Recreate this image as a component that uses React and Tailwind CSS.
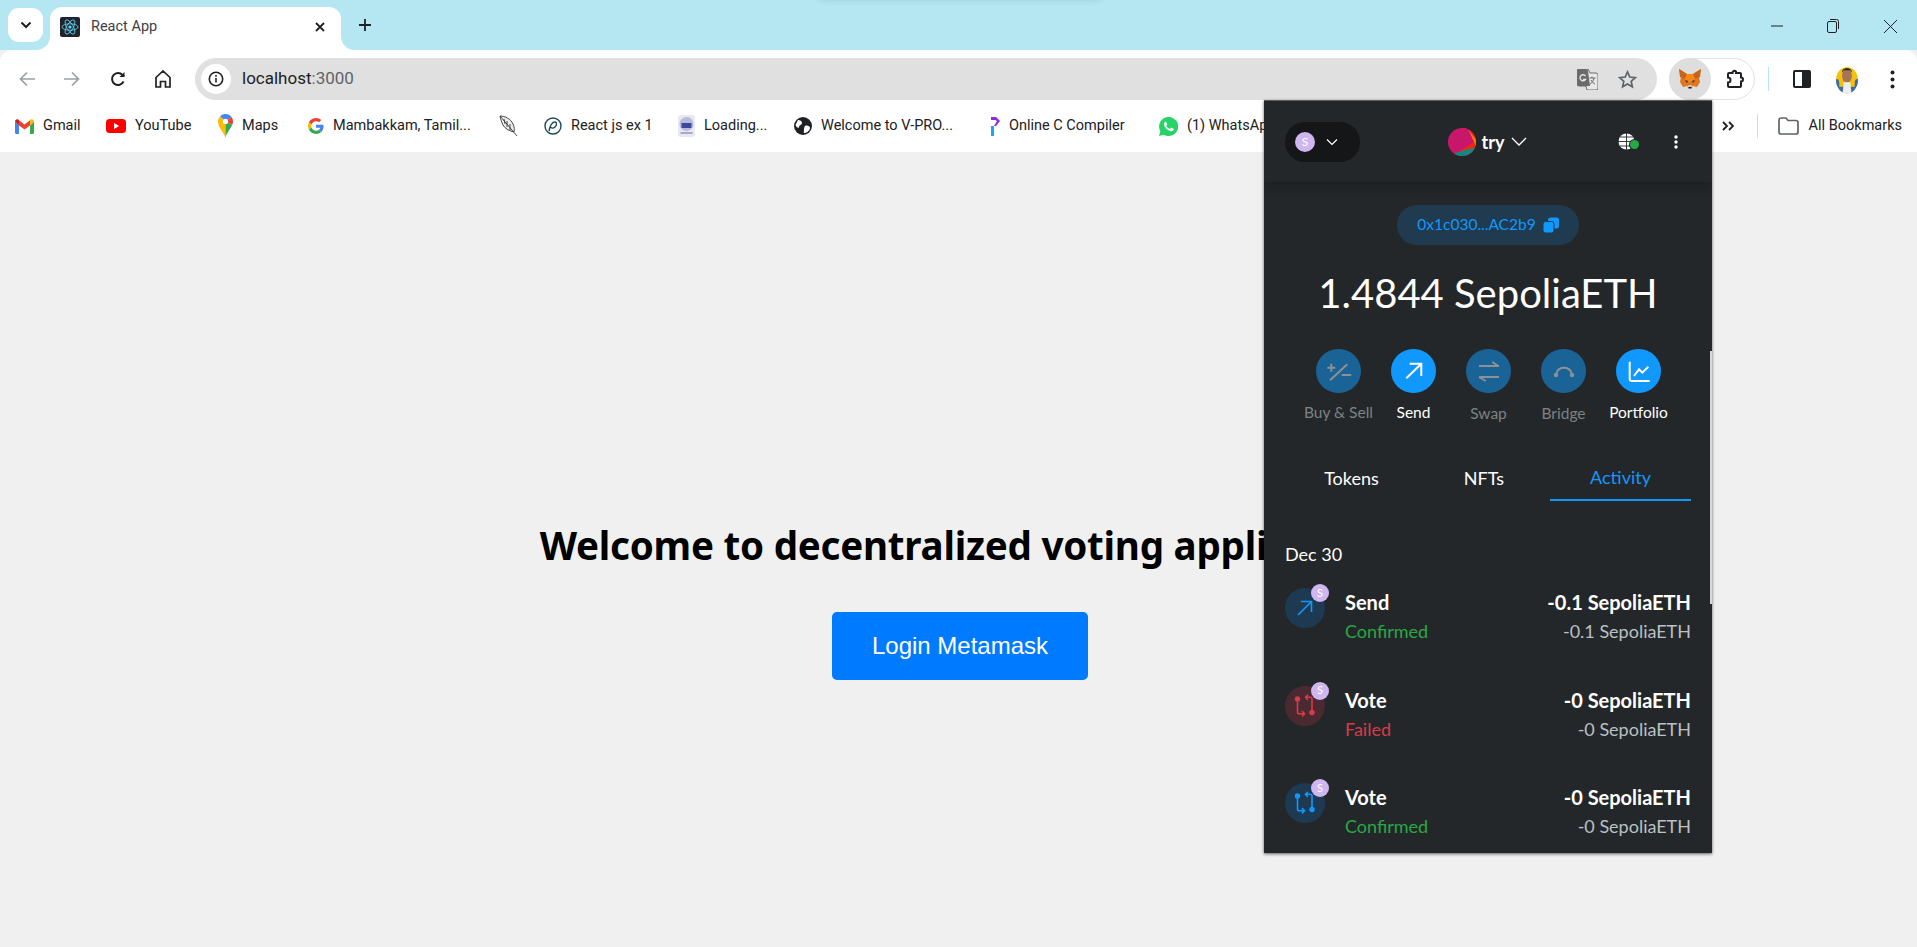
import React from 'react'

const Fox = ({ className }) => (
  <svg className={className} viewBox="0 0 24 24">
    <path d="M1 2l8 5h6l8-5-2 8 1 5-3 5-4-1-1 2h-4l-1-2-4 1-3-5 1-5z" fill="#e2761b" />
    <path d="M1 2l8 5-2 5-5-2z M23 2l-8 5 2 5 5-2z" fill="#c9631a" />
    <path d="M9 7h6l2 5-3 3h-4l-3-3z" fill="#f6851b" />
    <path d="M7 13l3 1-1 2z M17 13l-3 1 1 2z" fill="#233447" />
    <path d="M9 19l1 2h4l1-2-2-1h-2z" fill="#d7c1b3" />
    <path d="M10.500 20h3v1.500h-3z" fill="#161616" />
  </svg>
)

const ReactFavicon = () => (
  <svg className="w-5 h-5 rounded-[2px] bg-[#20232a]" viewBox="0 0 20 20" fill="none" stroke="#61dafb" strokeWidth="0.8">
    <ellipse cx="10" cy="10" rx="8" ry="3.200" />
    <ellipse cx="10" cy="10" rx="8" ry="3.200" transform="rotate(60 10 10)" />
    <ellipse cx="10" cy="10" rx="8" ry="3.200" transform="rotate(120 10 10)" />
    <circle cx="10" cy="10" r="1.600" fill="#61dafb" stroke="none" />
  </svg>
)

const GmailIcon = () => (
  <svg className="w-[19px] h-[15px]" viewBox="0 0 19 15">
    <path d="M0 2.500v11c0 .8.600 1.500 1.500 1.500H4V6.500z" fill="#4285f4" />
    <path d="M15 6.500V15h2.500c.9 0 1.500-.7 1.500-1.500v-11z" fill="#34a853" />
    <path d="M0 2.500C0 .8 1.900-.4 3.200.6L4 1.200v5.300z" fill="#c5221f" />
    <path d="M4 1.200l5.500 4.200L15 1.200v5.300L9.500 10.600 4 6.500z" fill="#ea4335" />
    <path d="M15 1.200l.8-.6C17.100-.4 19 .8 19 2.500l-4 4z" fill="#fbbc04" />
  </svg>
)

const YoutubeIcon = () => (
  <svg className="w-5 h-[14px]" viewBox="0 0 20 14">
    <rect width="20" height="14" rx="3.500" fill="#ff0000" />
    <path d="M8 4l5.200 3L8 10z" fill="#fff" />
  </svg>
)

const MapsIcon = () => (
  <svg className="w-[15px] h-[24px]" viewBox="0 0 15 24">
    <path d="M7.500 24C6.500 19 0 14 0 7.500c0-2 .8-3.900 2.200-5.300l5.300 5.300z" fill="#fbbc04" />
    <path d="M2.200 2.200C3.600.8 5.500 0 7.500 0c2.500 0 4.700 1.200 6 3L7.500 7.500z" fill="#4285f4" />
    <path d="M13.500 3c.9 1.300 1.500 2.800 1.500 4.500 0 1.200-.3 2.300-.7 3.300L7.500 7.500z" fill="#ea4335" />
    <path d="M14.300 10.800C12.500 15 8.500 19 7.500 24V7.500z" fill="#34a853" />
    <circle cx="7.500" cy="7.500" r="2.700" fill="#fff" />
  </svg>
)

const GoogleIcon = () => (
  <svg className="w-4 h-4" viewBox="0 0 48 48">
    <path fill="#EA4335" d="M24 9.500c3.500 0 6.700 1.200 9.200 3.600l6.900-6.900C35.900 2.400 30.500 0 24 0 14.600 0 6.500 5.400 2.600 13.200l8 6.200C12.400 13.700 17.700 9.500 24 9.500z" />
    <path fill="#4285F4" d="M46.500 24.500c0-1.600-.2-3.100-.4-4.500H24v9h12.700c-.6 2.900-2.200 5.400-4.700 7.100l7.700 6c4.500-4.200 6.800-10.400 6.800-17.600z" />
    <path fill="#FBBC05" d="M10.500 28.600c-.5-1.400-.8-3-.8-4.600s.3-3.200.8-4.600l-8-6.200C.9 16.500 0 20.100 0 24s.9 7.500 2.600 10.800z" />
    <path fill="#34A853" d="M24 48c6.500 0 11.900-2.100 15.900-5.900l-7.700-6c-2.100 1.400-4.900 2.300-8.100 2.300-6.300 0-11.600-4.200-13.500-9.900l-8 6.200C6.500 42.600 14.600 48 24 48z" />
  </svg>
)

const FeatherIcon = () => (
  <svg className="w-[19px] h-[22px]" viewBox="0 0 19 22" fill="none" stroke="#333" strokeWidth="0.9">
    <path d="M1 1c5 0 11 3 13 8 1.500 3 1.500 6 1 8-4-1-9-3-11-7C2.500 7 1.500 4 1 1z" fill="#eee" />
    <path d="M1 1l17 20 M5 4l1 5 M8 6l0 6 M11 9l0 6" />
  </svg>
)

const SwirlIcon = () => (
  <svg className="w-[18px] h-[18px]" viewBox="0 0 18 18" fill="none" stroke="#1f4a5c" strokeWidth="1.400">
    <circle cx="9" cy="9" r="8" />
    <path d="M5 14c1-5 3-9 6-9 2 0 2 3 0 5-1.500 1.500-4 1.500-4 0" />
  </svg>
)

const ShieldIcon = () => (
  <svg className="w-[17px] h-[22px]" viewBox="0 0 17 22">
    <rect width="17" height="22" rx="3" fill="#e8e8f2" />
    <circle cx="8.500" cy="9" r="7" fill="#b8bbdc" />
    <rect x="3.500" y="8" width="10" height="5" fill="#3c4a9c" />
    <rect x="2.500" y="17" width="12" height="2" fill="#a5a8d0" />
  </svg>
)

const GlobeIcon = () => (
  <svg className="w-[18px] h-[18px]" viewBox="0 0 18 18">
    <circle cx="9" cy="9" r="9" fill="#202124" />
    <path d="M4 3c2 0 4 1 4 3S5 8 5 10 2 10 1.500 8zM11 9c2-1 5 0 5 2s-3 5-5 5-1-2-1-3 0-3 1-4z" fill="#fff" />
  </svg>
)

const CompilerIcon = () => (
  <svg className="w-[11px] h-[19px]" viewBox="0 0 11 19">
    <path d="M2 0h5l4 4-4 5H5l3-5-2-1H2z" fill="#8a2be2" />
    <path d="M2 9h3v10H2z" fill="#19a5ff" />
  </svg>
)

const WhatsappIcon = () => (
  <svg className="w-[19px] h-[19px]" viewBox="0 0 20 20">
    <path d="M10 0a10 10 0 0 0-8.600 15L0 20l5.200-1.400A10 10 0 1 0 10 0z" fill="#25d366" />
    <path d="M6.800 4.800c-.5.100-1.800 1.300-1.500 3.200.3 2 2.800 6 7.300 7 1.600.2 2.900-1 3-2 .1-.5-2.600-2-3-1.800l-1.200 1.300c-1 0-3.300-1.800-3.800-3.200l1-1.200c.2-.4-.9-3.300-1.800-3.300z" fill="#fff" />
  </svg>
)

const Bookmark = ({ icon, label, className }) => (
  <div className={`flex items-center shrink-0 ${className}`}>
    <span className="shrink-0 flex">{icon}</span>
    {label && <span className="ml-[9px] text-[14.500px] text-[#202124] whitespace-nowrap">{label}</span>}
  </div>
)

const SBadge = ({ className }) => (
  <div className={`rounded-full bg-[#d0b6f0] text-white flex items-center justify-center ${className}`}>S</div>
)

const actions = [
  {
    label: 'Buy & Sell',
    active: false,
    labelClass: 'mt-[9px]',
    icon: <path d="M6 24.300L23.300 8.300 M3.300 11.700h8 M7.300 7.700v8 M17.700 19h9.600" />,
  },
  {
    label: 'Send',
    active: true,
    labelClass: 'mt-[9px]',
    icon: <path d="M7.300 22.300L22.300 7.700 M10.700 7.700h11.600V20" />,
  },
  {
    label: 'Swap',
    active: false,
    labelClass: 'mt-[10px]',
    icon: <path d="M5 10h20 M18.300 6l6 4 M25 21H5 M5 21l6.700 4" />,
  },
  {
    label: 'Bridge',
    active: false,
    labelClass: 'mt-[10px]',
    icon: (
      <>
        <path d="M7.500 17A8 8 0 0 1 22.500 17" />
        <circle cx="7" cy="19" r="2.200" fill="currentColor" stroke="none" />
        <circle cx="23" cy="19" r="2.200" fill="currentColor" stroke="none" />
      </>
    ),
  },
  {
    label: 'Portfolio',
    active: true,
    labelClass: 'mt-[9px]',
    icon: <path d="M5.700 5.700v17.300a2 2 0 0 0 2 2h18 M10 20l5-6.700 3.300 3.400 6-6" />,
  },
]

const transactions = [
  { title: 'Send', status: 'Confirmed', amount: '-0.1 SepoliaETH', type: 'send' },
  { title: 'Vote', status: 'Failed', amount: '-0 SepoliaETH', type: 'failed' },
  { title: 'Vote', status: 'Confirmed', amount: '-0 SepoliaETH', type: 'vote' },
]

const TxIcon = ({ type }) => {
  if (type === 'send') {
    return (
      <svg className="w-[20px] h-[20px] text-[#1098fc]" viewBox="0 0 20 20" fill="none" stroke="currentColor" strokeWidth="1.600">
        <path d="M3 17L16 4 M6 3.500h10.500V14" />
      </svg>
    )
  }
  return (
    <svg className={`w-[22px] h-[24px] ${type === 'failed' ? 'text-[#d73a49]' : 'text-[#1098fc]'}`} viewBox="0 0 22 24" fill="none" stroke="currentColor" strokeWidth="1.600">
      <circle cx="3.500" cy="5" r="2.700" fill="currentColor" stroke="none" />
      <circle cx="18" cy="18.500" r="2.700" fill="currentColor" stroke="none" />
      <path d="M3.500 7v11c0 1 .8 1.800 1.800 1.800H10 M8 17l2.500 2.800L8 22.500" />
      <path d="M18 16V5c0-1-.8-1.800-1.800-1.800H12 M14 .8L11.500 3.200 14 6" />
    </svg>
  )
}

function MetaMaskPopup() {
  return (
    <div className="absolute left-[1264px] top-[100px] w-[448px] h-[753px] bg-[#24272a] border-t border-[#5a5f63] shadow-[0_1px_3px_rgba(0,0,0,0.6)] overflow-hidden font-['Lato',sans-serif] text-white">
      {/* Header */}
      <div className="relative h-[81px] flex items-center justify-between pl-[21px] pr-[34px] shadow-[0_6px_10px_rgba(0,0,0,0.18)]">
        <div className="w-[75px] h-[40px] rounded-full bg-[#141618] flex items-center pl-[10px]">
          <SBadge className="w-[20px] h-[20px] text-[12px]" />
          <svg className="w-[12px] h-[8px] ml-[11px]" viewBox="0 0 12 8" fill="none" stroke="#fff" strokeWidth="1.200">
            <path d="M1 1.500l5 5 5-5" />
          </svg>
        </div>
        <div className="flex items-center mr-[3px]">
          <svg className="w-[28px] h-[28px] rounded-full" viewBox="0 0 28 28">
            <rect width="28" height="28" fill="#c8176a" />
            <path d="M13 0h15v28L8 26 26 14z" fill="#f5260e" />
            <path d="M13 0h8l7 14-2 0z" fill="#c8176a" />
            <path d="M20 1l8 11v6z" fill="#f77f00" />
            <path d="M7 25l21-6v9H7z" fill="#0e8a80" />
          </svg>
          <span className="ml-[6px] text-[18px] font-bold leading-none">try</span>
          <svg className="w-[16px] h-[9px] ml-[7px]" viewBox="0 0 16 9" fill="none" stroke="#fff" strokeWidth="1.300">
            <path d="M1 1l7 7 7-7" />
          </svg>
        </div>
        <div className="flex items-center">
          <div className="relative w-[17px] h-[17px] mr-[39px]">
            <svg className="w-[17px] h-[17px]" viewBox="0 0 17 17" fill="none">
              <circle cx="8.500" cy="8.500" r="8" fill="#fff" />
              <path d="M8.500 0v17 M0 8.500h17 M2 4h13 M2 13h13" stroke="#24272a" strokeWidth="0.900" />
            </svg>
            <span className="absolute left-[12px] top-[7px] w-[9px] h-[9px] rounded-full bg-[#28a745] ring-1 ring-[#24272a]" />
          </div>
          <svg className="w-[4px] h-[14px]" viewBox="0 0 4 14" fill="#fff">
            <circle cx="2" cy="2" r="1.700" />
            <circle cx="2" cy="7" r="1.700" />
            <circle cx="2" cy="12" r="1.700" />
          </svg>
        </div>
      </div>

      {/* Address */}
      <div className="mt-[23px] mx-auto w-[182px] h-[40px] rounded-full bg-[#203a50] flex items-center justify-center text-[#1098fc] text-[15.500px]">
        <span>0x1c030...AC2b9</span>
        <svg className="w-[16px] h-[16px] ml-[7px]" viewBox="0 0 16 16" fill="#1098fc">
          <rect x="5" y="0.500" width="11" height="11" rx="2.500" />
          <rect x="0" y="4.500" width="11" height="11.500" rx="2.500" stroke="#203a50" strokeWidth="1" />
        </svg>
      </div>

      {/* Balance */}
      <div className="mt-[24px] h-[48px] flex items-center justify-center text-[40px] leading-none font-normal whitespace-nowrap">
        1.4844 SepoliaETH
      </div>

      {/* Actions */}
      <div className="mt-[32px] pl-[37px] flex">
        {actions.map((a) => (
          <div key={a.label} className="w-[75px] flex flex-col items-center">
            <div className={`w-[45px] h-[44px] rounded-full flex items-center justify-center ${a.active ? 'bg-[#1098fc] text-white' : 'bg-[#1a6396] text-[#8b9195]'}`}>
              <svg className="w-[30px] h-[30px]" viewBox="0 0 30 30" fill="none" stroke="currentColor" strokeWidth="2">
                {a.icon}
              </svg>
            </div>
            <span className={`${a.labelClass} text-[15.500px] leading-[20px] whitespace-nowrap ${a.active ? 'text-white' : 'text-[#7e8285]'}`}>
              {a.label}
            </span>
          </div>
        ))}
      </div>

      {/* Tabs */}
      <div className="mt-[35px] mx-[21px] flex h-[43px] text-[18px]">
        <div className="w-[133px] flex items-center justify-center pb-[2px]">Tokens</div>
        <div className="w-[132px] flex items-center justify-center pb-[2px]">NFTs</div>
        <div className="w-[141px] flex items-center justify-center pb-[2px] text-[#1098fc] border-b-2 border-[#1098fc]">Activity</div>
      </div>

      {/* Activity */}
      <div className="mt-[41px] px-[21px]">
        <div className="text-[18px] leading-[24px]">Dec 30</div>
        <div className="mt-[22px] flex flex-col gap-[39.500px]">
          {transactions.map((t, i) => (
            <div key={i} className="flex h-[58px]">
              <div className={`relative w-[40px] h-[40px] rounded-full flex items-center justify-center ${t.type === 'failed' ? 'bg-[#4a2a30]' : 'bg-[#1e3a52]'}`}>
                <TxIcon type={t.type} />
                <SBadge className="absolute left-[26px] top-[-4px] w-[18px] h-[18px] text-[11px]" />
              </div>
              <div className="ml-[20px] flex-1">
                <div className="flex justify-between text-[20px] font-bold leading-[28px]">
                  <span>{t.title}</span>
                  <span>{t.amount}</span>
                </div>
                <div className="flex justify-between text-[18px] leading-[30px]">
                  <span className={t.status === 'Failed' ? 'text-[#d73a49]' : 'text-[#28a745]'}>{t.status}</span>
                  <span className="text-[#bbc0c5]">{t.amount}</span>
                </div>
              </div>
            </div>
          ))}
        </div>
      </div>

      {/* Scrollbar */}
      <div className="absolute right-0 top-[250px] w-[2px] h-[253px] bg-[#d8d8d8]" />
    </div>
  )
}

export default function App() {
  return (
    <div className="relative w-[1917px] h-[947px] overflow-hidden flex flex-col bg-[#f0f0f0] font-['Roboto',sans-serif]">
      {/* Tab strip */}
      <div className="relative h-[50px] shrink-0 bg-[#b5e7f3] flex items-start">
        <div className="absolute left-[820px] top-[-6px] w-[280px] h-[6px] shadow-[0_1px_5px_rgba(90,130,140,0.2)]" />
        <div className="ml-[8px] mt-[8px] w-[35px] h-[34px] rounded-[11px] bg-white flex items-center justify-center">
          <svg className="w-[12px] h-[8px]" viewBox="0 0 12 8" fill="none" stroke="#202124" strokeWidth="2">
            <path d="M1.500 1.500L6 6l4.500-4.500" />
          </svg>
        </div>
        <div className="relative ml-[7px] mt-[7px] w-[291px] h-[43px] bg-white rounded-t-[12px] flex items-center pl-[10px] pb-[4px]">
          <svg className="absolute left-[-14px] bottom-0 w-[14px] h-[14px]" viewBox="0 0 14 14" fill="#fff">
            <path d="M0 14C8 14 14 8 14 0V14z" />
          </svg>
          <svg className="absolute right-[-14px] bottom-0 w-[14px] h-[14px]" viewBox="0 0 14 14" fill="#fff">
            <path d="M14 14C6 14 0 8 0 0V14z" />
          </svg>
          <ReactFavicon />
          <span className="ml-[11px] text-[14.500px] text-[#3c4043]">React App</span>
          <svg className="ml-auto mr-[16px] w-[10px] h-[10px]" viewBox="0 0 10 10" stroke="#202124" strokeWidth="1.800">
            <path d="M1 1l8 8 M9 1l-8 8" />
          </svg>
        </div>
        <svg className="ml-[18px] mt-[19px] w-[12px] h-[12px]" viewBox="0 0 12 12" stroke="#202124" strokeWidth="1.800">
          <path d="M6 0v12 M0 6h12" />
        </svg>
        <div className="ml-auto mt-[19px] flex items-center">
          <svg className="w-[12px] h-[12px] mr-[44px]" viewBox="0 0 12 12" stroke="#202124" strokeWidth="1">
            <path d="M0 6h12" />
          </svg>
          <svg className="w-[12px] h-[14px] mr-[45px]" viewBox="0 0 12 14" fill="none" stroke="#202124" strokeWidth="1">
            <rect x="0.500" y="2.500" width="9" height="11" rx="1.500" />
            <path d="M3 .5h6.500a2 2 0 0 1 2 2V10" />
          </svg>
          <svg className="w-[13px] h-[13px] mr-[20px]" viewBox="0 0 13 13" stroke="#202124" strokeWidth="1">
            <path d="M0 0l13 13 M13 0L0 13" />
          </svg>
        </div>
      </div>

      {/* Toolbar */}
      <div className="h-[50px] shrink-0 bg-white rounded-t-[12px] flex items-end">
        <div className="h-[42px] w-[195px] flex items-center shrink-0">
          <svg className="ml-[19px] w-[16px] h-[16px]" viewBox="0 0 16 16" fill="none" stroke="#9aa0a6" strokeWidth="1.700">
            <path d="M16 8H2 M8 1.500L1.500 8 8 14.500" />
          </svg>
          <svg className="ml-[29px] w-[16px] h-[16px]" viewBox="0 0 16 16" fill="none" stroke="#9aa0a6" strokeWidth="1.700">
            <path d="M0 8h14 M8 1.500L14.500 8 8 14.500" />
          </svg>
          <svg className="ml-[30px] w-[16px] h-[16px]" viewBox="0 0 16 16" fill="none" stroke="#202124" strokeWidth="2">
            <path d="M13.500 10.500a6 6 0 1 1-1-6.500l1.500 1.500" />
            <path d="M14.500 1v5h-5" fill="#202124" stroke="none" />
          </svg>
          <svg className="ml-[29px] w-[16px] h-[18px]" viewBox="0 0 16 18" fill="none" stroke="#202124" strokeWidth="1.700">
            <path d="M1 7.500L8 1l7 6.500V17h-4.500v-5.500h-5V17H1z" />
          </svg>
        </div>
        <div className="w-[1462px] h-[42px] shrink-0 rounded-l-[21px] rounded-r-[21px] bg-[#e0e0e0] flex items-center pl-[6px] pr-[20px]">
          <div className="w-[30px] h-[30px] rounded-full bg-white flex items-center justify-center">
            <svg className="w-[16px] h-[16px]" viewBox="0 0 16 16" fill="none" stroke="#202124" strokeWidth="1.600">
              <circle cx="8" cy="8" r="6.700" />
              <path d="M8 7v4.500 M8 4v1.700" />
            </svg>
          </div>
          <span className="ml-[11px] text-[17px] text-[#202124]">
            localhost<span className="text-[#5f6368]">:3000</span>
          </span>
          <svg className="ml-auto w-[21px] h-[21px]" viewBox="0 0 21 21">
            <path d="M2 0h9l2 4h6a2 2 0 0 1 2 2v13a2 2 0 0 1-2 2H10l-1-4H2a2 2 0 0 1-2-2V2a2 2 0 0 1 2-2z" fill="#e8e8e8" stroke="#6b6b6b" />
            <path d="M2 0h7a2 2 0 0 1 2 2l2 15H2a2 2 0 0 1-2-2V2a2 2 0 0 1 2-2z" fill="#6b6b6b" />
            <path d="M8.500 7a3 3 0 1 0 0 3.500H6" fill="none" stroke="#e8e8e8" strokeWidth="1.300" />
            <path d="M12.500 9h6 M15 7.500v1.500 M17 9c-.5 3-2 5-4 6 M14 11c1 2 2.500 3.500 4 4" fill="none" stroke="#6b6b6b" strokeWidth="1" />
          </svg>
          <svg className="ml-[20px] w-[19px] h-[19px]" viewBox="0 0 20 20" fill="none" stroke="#5f6368" strokeWidth="1.800">
            <path d="M10 2l2.400 5.400 5.800.6-4.300 3.900 1.200 5.700L10 14.700l-5.100 2.900 1.200-5.700L1.800 8l5.800-.6z" />
          </svg>
        </div>
        <div className="ml-[12px] w-[86px] h-[42px] shrink-0 rounded-full border border-[#e3e3e3] flex items-center">
          <div className="w-[42px] h-[42px] ml-[-1px] rounded-full bg-[#dedede] flex items-center justify-center">
            <Fox className="w-[24px] h-[24px]" />
          </div>
          <svg className="ml-[14px] w-[20px] h-[20px]" viewBox="0 0 20 20" fill="none" stroke="#202124" strokeWidth="2">
            <path d="M4 4h3.500a2 2 0 0 1 3.500-1.500V4H15a1 1 0 0 1 1 1v3.500a2 2 0 1 1 0 4V17a1 1 0 0 1-1 1H4a1 1 0 0 1-1-1v-3.500a2.500 2.500 0 0 0 0-5V5a1 1 0 0 1 1-1z" />
          </svg>
        </div>
        <div className="h-[42px] flex items-center">
          <div className="ml-[13px] w-px h-[24px] bg-[#b5e7f3]" />
          <div className="ml-[24px] w-[18px] h-[18px] rounded-[2px] border-2 border-[#202124] flex justify-end">
            <div className="w-[7px] h-full bg-[#202124]" />
          </div>
          <svg className="ml-[25px] w-[22px] h-[30px]" viewBox="0 0 20 26">
            <ellipse cx="10" cy="14" rx="10" ry="12" fill="#f4c20d" />
            <path d="M0 14a10 12 0 0 0 20 0c0-2-3-1-3 2v4H3v-4c0-3-3-4-3-2z" fill="#3b6ea8" />
            <ellipse cx="10" cy="10" rx="4.500" ry="6.500" fill="#a87458" />
            <path d="M5.500 7C5.500 2 14.500 2 14.500 7L13 5H7z" fill="#222" />
            <path d="M7 16h6l1 10H6z" fill="#eee" />
          </svg>
          <svg className="ml-[32px] w-[5px] h-[19px]" viewBox="0 0 5 19" fill="#202124">
            <circle cx="2.500" cy="2.500" r="2" />
            <circle cx="2.500" cy="9.500" r="2" />
            <circle cx="2.500" cy="16.500" r="2" />
          </svg>
        </div>
      </div>

      {/* Bookmarks */}
      <div className="relative h-[52px] shrink-0 bg-white flex items-center overflow-hidden">
        <Bookmark className="ml-[15px] w-[91px]" icon={<GmailIcon />} label="Gmail" />
        <Bookmark className="w-[112px]" icon={<YoutubeIcon />} label="YouTube" />
        <Bookmark className="w-[90px]" icon={<MapsIcon />} label="Maps" />
        <Bookmark className="w-[191px]" icon={<GoogleIcon />} label="Mambakkam, Tamil..." />
        <Bookmark className="w-[45px]" icon={<FeatherIcon />} />
        <Bookmark className="w-[134px]" icon={<SwirlIcon />} label="React js ex 1" />
        <Bookmark className="w-[116px]" icon={<ShieldIcon />} label="Loading..." />
        <Bookmark className="w-[195px]" icon={<GlobeIcon />} label="Welcome to V-PRO..." />
        <Bookmark className="w-[170px]" icon={<CompilerIcon />} label="Online C Compiler" />
        <Bookmark className="w-[105px]" icon={<WhatsappIcon />} label="(1) WhatsApp" />
        <svg className="ml-auto w-[12px] h-[10px]" viewBox="0 0 12 10" fill="none" stroke="#202124" strokeWidth="1.800">
          <path d="M1 1l4 4-4 4 M7 1l4 4-4 4" />
        </svg>
        <div className="ml-[23px] w-px h-[24px] bg-[#b5e7f3]" />
        <svg className="ml-[20px] w-[21px] h-[18px]" viewBox="0 0 21 18" fill="none" stroke="#5f6368" strokeWidth="1.700">
          <path d="M1 3a2 2 0 0 1 2-2h5l2 2.500h8a2 2 0 0 1 2 2V15a2 2 0 0 1-2 2H3a2 2 0 0 1-2-2z" />
        </svg>
        <span className="ml-[10px] mr-[15px] text-[14.500px] text-[#202124] whitespace-nowrap">All Bookmarks</span>
      </div>

      {/* Page */}
      <main className="flex-1 flex flex-col items-center pt-[367px]">
        <h1 className="ml-[9px] text-[38.600px] tracking-[-0.25px] font-bold leading-[52px] text-black whitespace-nowrap font-['Noto_Sans',sans-serif]">
          Welcome to decentralized voting application
        </h1>
        <button className="mt-[41px] ml-[3px] px-[40px] py-[20px] rounded-[5px] bg-[#007bff] text-white text-[24px] leading-[28px] font-['Liberation_Sans',sans-serif]">
          Login Metamask
        </button>
      </main>

      <MetaMaskPopup />
    </div>
  )
}
